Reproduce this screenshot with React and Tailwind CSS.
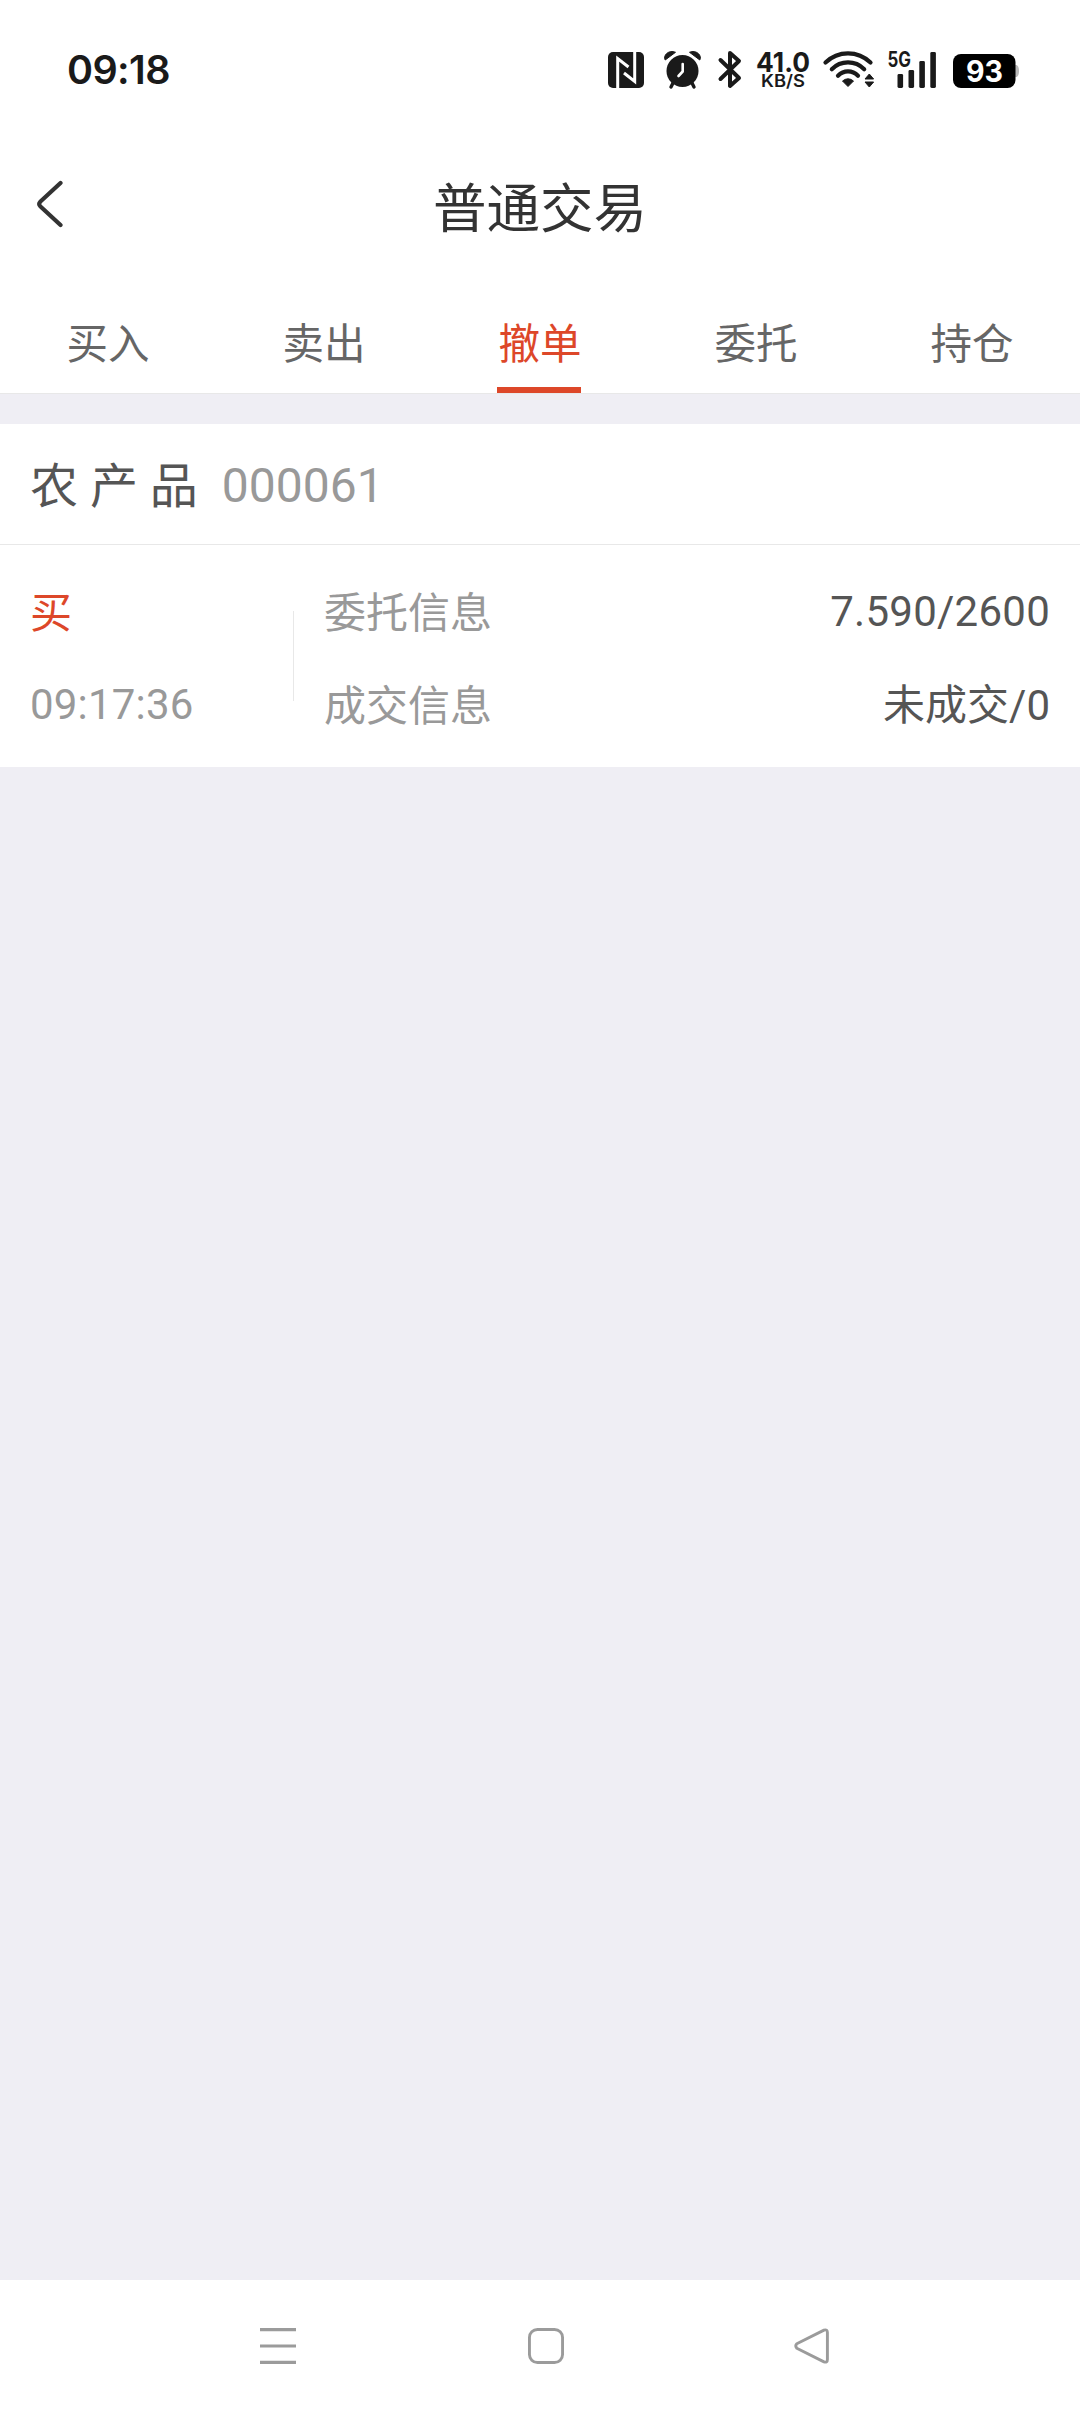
import { useState } from 'react'

const TABS = [
  { key: 'buy', label: '买入' },
  { key: 'sell', label: '卖出' },
  { key: 'cancel', label: '撤单' },
  { key: 'orders', label: '委托' },
  { key: 'holdings', label: '持仓' }
]

const ORDERS = [
  {
    id: 1,
    name: '农 产 品',
    code: '000061',
    side: '买',
    time: '09:17:36',
    order: '7.590/2600',
    deal: '未成交/0'
  }
]

function StatusIcons() {
  return (
    <svg width="412" height="60" viewBox="608 40 412 60" className="block" fill="#1a1a1a" fontFamily="Inter, sans-serif">
      {/* nfc */}
      <rect x="608" y="52" width="36" height="36" rx="5" />
      <path d="M617.7 88V58.5L628.5 67M634.7 52V81.5L624 73" fill="none" stroke="#fff" strokeWidth="3" />

      {/* alarm */}
      <circle cx="682.5" cy="71" r="16" />
      <path d="M665.2 60C662.5 55.5 669 49.3 675.5 52.3ZM699.8 60C702.5 55.5 696 49.3 689.5 52.3Z" stroke="#1a1a1a" strokeLinejoin="round" />
      <path d="M673.5 82L671 87M691.5 82L694 87" stroke="#1a1a1a" strokeWidth="3.4" strokeLinecap="round" />
      <path d="M682.7 64V71.5L678.5 76" fill="none" stroke="#fff" strokeWidth="2.6" strokeLinecap="round" strokeLinejoin="round" />

      {/* bluetooth */}
      <path d="M720.5 60L739 78L730 86V53L739 61L720.5 79" fill="none" stroke="#1a1a1a" strokeWidth="4" strokeLinecap="round" strokeLinejoin="round" />

      {/* network speed */}
      <text x="756" y="71.7" fontSize="27.5" fontWeight="700" textLength="54" lengthAdjust="spacingAndGlyphs">41.0</text>
      <text x="761" y="87.3" fontSize="17" fontWeight="600" textLength="44" lengthAdjust="spacingAndGlyphs">KB/S</text>

      {/* wifi */}
      <g fill="none" stroke="#1a1a1a" strokeWidth="4.2" strokeLinecap="round">
        <path d="M825.5 62.6Q835 53.4 848 53.4Q861 53.4 870.5 62.6" />
        <path d="M831.8 69.2Q838.5 62.4 848 62.4Q857.5 62.4 864.2 69.2" />
        <path d="M838 75.8Q842.3 71.4 848 71.4Q853.7 71.4 858 75.8" />
      </g>
      <path d="M842.5 81Q848 76.6 853.5 81L848 86.5Z" stroke="#1a1a1a" strokeLinejoin="round" />
      <path d="M869.3 74L873.6 79H865ZM869.3 87L873.6 82H865Z" stroke="#1a1a1a" strokeLinejoin="round" />

      {/* signal */}
      <text x="887.5" y="67" fontSize="21" fontWeight="700" textLength="23.5" lengthAdjust="spacingAndGlyphs">5G</text>
      <rect x="897.5" y="74" width="5.6" height="14" rx="1.4" />
      <rect x="908.5" y="70" width="5.6" height="18" rx="1.4" />
      <rect x="919.3" y="61" width="5.6" height="27" rx="1.4" />
      <rect x="930.3" y="52" width="5.6" height="36" rx="1.4" />

      {/* battery */}
      <path d="M1014 65H1016.5Q1019 66 1019 71T1016.5 77H1014Z" fill="#b9b9b9" />
      <rect x="953" y="54" width="62.5" height="34" rx="8" fill="#000" />
      <text x="966" y="82.4" fontSize="29.5" fontWeight="700" fill="#fff" textLength="37" lengthAdjust="spacingAndGlyphs">93</text>
    </svg>
  )
}

function StatusBar() {
  return (
    <div className="flex h-[140px] items-start justify-between pr-[60px] pl-[67px]">
      <span className="mt-[46px] font-[Inter,sans-serif] text-[39.5px] leading-[48px] font-semibold tracking-[-0.6px] text-[#1a1a1a]">09:18</span>
      <div className="mt-10">
        <StatusIcons />
      </div>
    </div>
  )
}

function Header() {
  return (
    <header className="grid h-[136px] grid-cols-[108px_1fr_108px] items-center">
      <button className="pb-2 pl-9">
        <svg width="30" height="48" viewBox="0 0 30 48" fill="none" stroke="#333" strokeWidth="4.2" strokeLinecap="round" strokeLinejoin="round">
          <path d="M24.5 3L4.2 21.8Q2.2 24 4.2 26.2L24.5 45" />
        </svg>
      </button>
      <h1 className="pt-1 text-center text-[53.5px] leading-[72px] text-[#333]">普通交易</h1>
    </header>
  )
}

function OrderCard({ item }) {
  return (
    <section className="bg-white">
      <div className="flex h-[121px] items-center gap-6 border-b border-[#e8e8e8] px-[30px] pt-[3px] text-5xl">
        <span className="pt-[3px] text-[#555]">{item.name}</span>
        <span className="text-[#999]">{item.code}</span>
      </div>
      <div className="flex h-[222px] items-start px-[30px] pt-5 text-[42px] leading-[93px]">
        <div className="w-[263px]">
          <div className="-mb-0.5 pt-0.5 text-[#dd4729]">{item.side}</div>
          <div className="tracking-[0.2px] text-[#999]">{item.time}</div>
        </div>
        <div className="mt-[46px] h-[90px] w-px bg-[#e8e8e8]" />
        <div className="ml-[30px] flex-1">
          <div className="flex h-[93px] justify-between">
            <span className="pt-0.5 text-[#999]">委托信息</span>
            <span className="tracking-[0.25px] text-[#555]">{item.order}</span>
          </div>
          <div className="flex h-[93px] justify-between">
            <span className="pt-0.5 text-[#999]">成交信息</span>
            <span className="pt-px text-[#555]">{item.deal}</span>
          </div>
        </div>
      </div>
    </section>
  )
}

function NavBar() {
  return (
    <nav className="flex h-[132px] items-start bg-white pt-12 pl-[260px]">
      <svg width="36" height="36" viewBox="0 0 36 36" stroke="#9b9b9b" strokeWidth="3.2">
        <path d="M0 1.6H36M0 18H36M0 34.4H36" />
      </svg>
      <svg width="36" height="36" viewBox="0 0 36 36" fill="none" stroke="#9b9b9b" strokeWidth="2.9" className="ml-[232px]">
        <rect x="1.45" y="1.45" width="33.1" height="33.1" rx="8" />
      </svg>
      <svg width="36" height="36" viewBox="0 0 36 36" fill="none" stroke="#9b9b9b" strokeWidth="2.9" className="ml-[230px]">
        <path d="M2.8 15.8L30 2.1Q33.4 1 33.4 4.6V31.4Q33.4 35 30 33.9L2.8 20.2Q0.8 18 2.8 15.8Z" strokeLinejoin="round" />
      </svg>
    </nav>
  )
}

export default function App() {
  const [tab, setTab] = useState('cancel')

  return (
    <div className="flex h-[2412px] w-[1080px] flex-col bg-[#efeef4] font-[Roboto,'Noto_Sans_CJK_SC',sans-serif]">
      <div className="mb-[30px] border-b border-[#e8e8e8] bg-white">
        <StatusBar />
        <Header />
        <div className="grid h-[117px] grid-cols-5">
          {TABS.map(({ key, label }) => (
            <button key={key} onClick={() => setTab(key)} className="flex flex-col items-center justify-between pt-[37px]">
              <span className={tab === key ? 'text-[41.5px] leading-[63px] text-[#dd4729]' : 'text-[41.5px] leading-[63px] text-[#666]'}>
                {label}
              </span>
              {tab === key && <span className="mr-0.5 h-1.5 w-[84px] bg-[#dd4729]" />}
            </button>
          ))}
        </div>
      </div>

      <main className="flex-1">
        {ORDERS.map(item => <OrderCard key={item.id} item={item} />)}
      </main>

      <NavBar />
    </div>
  )
}
